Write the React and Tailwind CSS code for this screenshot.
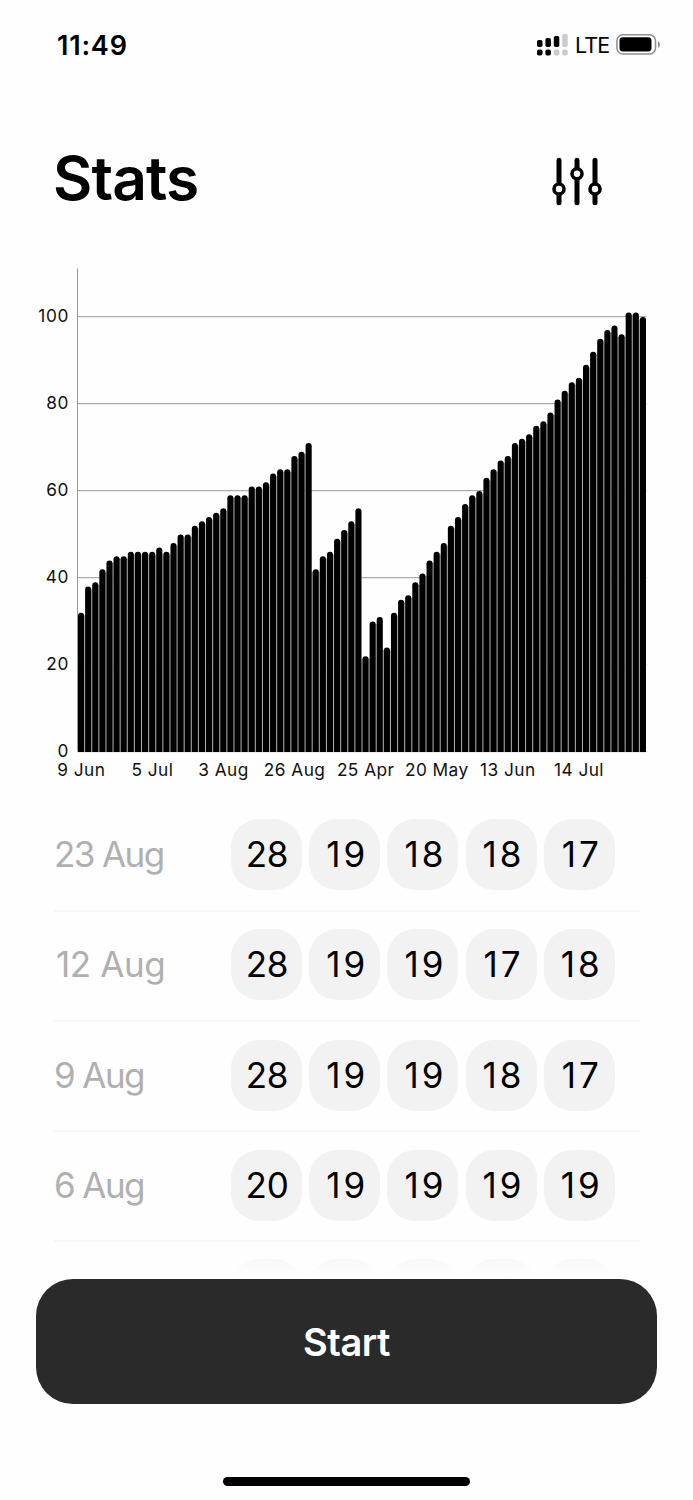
import clsx from "clsx";

const reps = [
  32, 38, 39, 42, 44, 45, 45, 46, 46, 46, 46, 47, 46, 48, 50, 50, 52, 53, 54, 55,
  56, 59, 59, 59, 61, 61, 62, 64, 65, 65, 68, 69, 71, 42, 45, 46, 49, 51, 53, 56,
  22, 30, 31, 24, 32, 35, 36, 39, 41, 44, 46, 48, 52, 54, 57, 59, 60, 63, 65, 67,
  68, 71, 72, 73, 75, 76, 78, 81, 83, 85, 86, 89, 92, 95, 97, 98, 96, 101, 101, 100,
];

const months = ["9 Jun", "5 Jul", "3 Aug", "26 Aug", "25 Apr", "20 May", "13 Jun", "14 Jul"];

const workouts = [
  { date: "23 Aug", sets: [28, 19, 18, 18, 17] },
  { date: "12 Aug", sets: [28, 19, 19, 17, 18] },
  { date: "9 Aug", sets: [28, 19, 19, 18, 17] },
  { date: "6 Aug", sets: [20, 19, 19, 19, 19] },
];

function StatusBar() {
  return (
    <div className="flex h-[90px] items-center justify-between pl-[57px] pr-[32px]">
      <span className="text-[27px] font-[560] leading-none tracking-[0.8px]">11:49</span>
      <div className="flex items-center">
        <svg width="32" height="24" viewBox="0 0 32 24">
          <rect x="1" y="7" width="5.5" height="7" rx="1.8" />
          <rect x="9.4" y="5" width="5.5" height="9" rx="1.8" />
          <rect x="17.8" y="3" width="5.5" height="11" rx="1.8" />
          <rect x="26.2" y="1" width="5.5" height="13" rx="1.8" fill="#cbcbcb" />
          <rect x="1" y="16.5" width="5.5" height="6" rx="1.8" />
          <rect x="9.4" y="16.5" width="5.5" height="6" rx="1.8" />
          <rect x="17.8" y="16.5" width="5.5" height="6" rx="1.8" fill="#cbcbcb" />
          <rect x="26.2" y="16.5" width="5.5" height="6" rx="1.8" fill="#cbcbcb" />
        </svg>
        <span className="ml-[7px] w-[34px] pt-px text-[21.5px] leading-none tracking-[-0.9px]">LTE</span>
        <svg className="ml-[7px]" width="45" height="22" viewBox="0 0 45 22">
          <rect x="0.9" y="0.8" width="38.6" height="19.2" rx="6" fill="none" stroke="#8f8f8f" strokeWidth="1.5" />
          <rect x="3.5" y="3.3" width="32" height="14.2" rx="3.4" />
          <path d="M42 7.3c2.5 1 2.5 5.4 0 6.4z" fill="#8f8f8f" />
        </svg>
      </div>
    </div>
  );
}

function SlidersIcon() {
  return (
    <svg width="52" height="50" viewBox="0 0 52 50" fill="#fff" stroke="#000" strokeWidth="5" strokeLinecap="round">
      <path d="M8 3.2v42.6M26 3.2v42.6M44 3.2v42.6" />
      <circle cx="8" cy="32" r="5" strokeWidth="3.6" />
      <circle cx="26" cy="16.8" r="5" strokeWidth="3.6" />
      <circle cx="44" cy="32" r="5" strokeWidth="3.6" />
    </svg>
  );
}

function Chart() {
  const left = 77.5;
  const base = 491.5;
  const unit = 4.35;
  const step = 7.1125;

  return (
    <svg className="block" width="693" height="530" viewBox="0 0 693 530">
      <path d="M77.5 8.5V491.5" stroke="#999" />
      {[0, 20, 40, 60, 80, 100].map((v) => (
        <g key={v}>
          <path d={`M77.5 ${base + 0.2 - v * unit}H646.5`} stroke="#999" />
          <text x="69" y={base - v * unit + 5.4} textAnchor="end" fontSize="17.3" letterSpacing="0.6" fill="#111">
            {v}
          </text>
        </g>
      ))}
      {/* grey slivers between neighbouring bars */}
      {reps.slice(1).map((v, i) => {
        const top = base - Math.min(v, reps[i]) * unit + 3;
        return (
          <rect key={i} x={left + (i + 1) * step - 1} y={top} width="2" height={base - top} fill="#b0b0b0" />
        );
      })}
      {reps.map((v, i) => {
        const x = left + i * step + 0.5;
        const top = base + 0.4 - v * unit;
        return (
          <path
            key={i}
            d={`M${x} ${base + 0.5}V${top + 3}q0-3 3.05-3t3.05 3V${base + 0.5}z`}
          />
        );
      })}
      {months.map((m, i) => (
        <text key={m} x={left + 3.8 + i * 71.1} y="516" textAnchor="middle" fontSize="17.3" letterSpacing="0.45" fill="#111">
          {m}
        </text>
      ))}
    </svg>
  );
}

// a leading 1 is narrow in Inter, so it gets wider tracking
const startsWithOne = (value) => String(value).startsWith("1");

function WorkoutRow({ date, sets }) {
  return (
    <div className="flex h-[110.2px] items-center border-b-2 border-[#f6f6f6] pb-[2px]">
      <span
        className={clsx(
          "w-[177px] text-[35px] font-[370] leading-none text-[#b0b0b0]",
          startsWithOne(date) ? "pl-[2px] tracking-[-0.4px]" : "tracking-[-1.6px]"
        )}
      >
        {date}
      </span>
      <div className="flex gap-[7.2px]">
        {sets.map((n, i) => (
          <div
            key={i}
            className={clsx(
              "flex h-[71px] w-[71px] items-center justify-center rounded-[28px] bg-[#f2f2f2] text-[35px] font-[370] leading-none",
              startsWithOne(n) ? "pl-[5px] tracking-[3px]" : "pl-px tracking-[-0.2px]"
            )}
          >
            {n}
          </div>
        ))}
      </div>
    </div>
  );
}

export default function App() {
  return (
    <div className="flex h-[1500px] w-[693px] flex-col overflow-hidden bg-[#fefefe] font-['Inter',sans-serif] text-black">
      <StatusBar />

      <header className="flex h-[170px] items-start justify-between pl-[53px] pr-[90px] pt-[57px]">
        <h1 className="text-[60.5px] font-[570] leading-[63px] tracking-[-0.9px]">Stats</h1>
        <div className="pt-[10px]">
          <SlidersIcon />
        </div>
      </header>

      <Chart />

      <div className="h-[489px] overflow-hidden pl-[54px] pr-[53px] pt-[11.6px]">
        {workouts.map((w) => (
          <WorkoutRow key={w.date} date={w.date} sets={w.sets} />
        ))}
        {/* next row fades out under the button */}
        <div className="flex gap-[7.2px] pl-[177px] pt-[17px]">
          {[0, 1, 2, 3, 4].map((i) => (
            <div key={i} className="h-[71px] w-[71px] rounded-[28px] bg-linear-to-b from-[#f8f8f8] to-[#fefefe] to-[16px]" />
          ))}
        </div>
      </div>

      <button className="mx-[36px] h-[125px] shrink-0 rounded-[37px] bg-[#2a2a2a] pt-px text-[38px] font-[570] leading-none tracking-[-0.5px] text-white">
        Start
      </button>

      <div className="mx-auto mt-[73px] h-[9px] w-[247px] shrink-0 rounded-full bg-black" />
    </div>
  );
}
